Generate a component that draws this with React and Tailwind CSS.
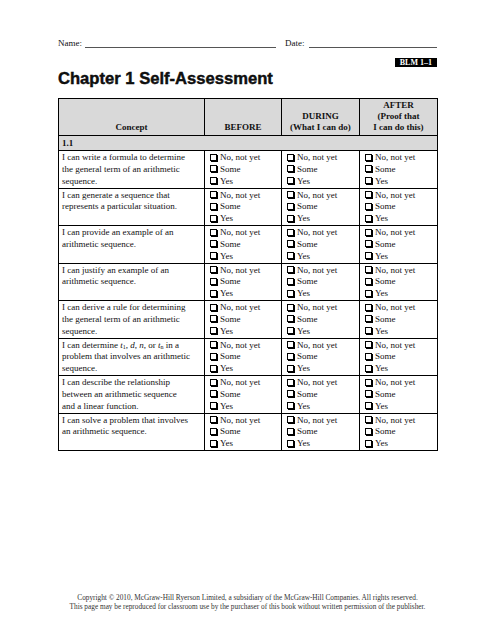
import React from 'react';

const rows = [
  ['I can write a formula to determine', 'the general term of an arithmetic', 'sequence.'],
  ['I can generate a sequence that', 'represents a particular situation.'],
  ['I can provide an example of an', 'arithmetic sequence.'],
  ['I can justify an example of an', 'arithmetic sequence.'],
  ['I can derive a rule for determining', 'the general term of an arithmetic', 'sequence.'],
  [
    <>
      I can determine <i>t</i>
      <sub className="text-[6px]">1</sub>, <i>d</i>, <i>n</i>, or <i>t</i>
      <sub className="text-[6px]">n</sub> in a
    </>,
    'problem that involves an arithmetic',
    'sequence.',
  ],
  ['I can describe the relationship', 'between an arithmetic sequence', 'and a linear function.'],
  ['I can solve a problem that involves', 'an arithmetic sequence.'],
];

const options = ['No, not yet', 'Some', 'Yes'];

function Box() {
  // wingdings-style shadowed square
  return (
    <span className="inline-block w-[7px] h-[7px] border border-black shadow-[1px_1px_0_#000] mr-[3px] align-[-0.5px]" />
  );
}

function Choices() {
  return (
    <td className="border border-black align-top pl-[5px] pt-[1px]">
      {options.map((o) => (
        <div key={o} className="whitespace-nowrap leading-[11.8px]">
          <Box />
          {o}
        </div>
      ))}
    </td>
  );
}

export default function App() {
  return (
    <div className="min-h-[640px] w-[495px] bg-white flex flex-col text-[#111] font-['Liberation_Serif',serif]">
      <div className="ml-[58px] w-[379px] pt-[38px]">
        {/* --- NAME / DATE --- */}
        <div className="flex items-end text-[9px] leading-[10px]">
          <span>Name:</span>
          <span className="ml-[3px] w-[191px] border-b border-[#555]" />
          <span className="ml-[9px]">Date:</span>
          <span className="ml-[4px] w-[128px] border-b border-[#555]" />
        </div>

        <div className="flex justify-end mt-[10px]">
          <span className="bg-black text-white font-bold text-[8px] leading-[9px] px-[5px]">BLM 1–1</span>
        </div>

        <h1 className="font-['Liberation_Sans',sans-serif] font-bold text-[16.6px] leading-[20px] [-webkit-text-stroke:0.4px_black] mt-[2px]">
          Chapter 1 Self-Assessment
        </h1>

        {/* --- TABLE --- */}
        <table className="mt-[9px] w-[379px] table-fixed border-collapse text-[9px]">
          <colgroup>
            <col className="w-[146px]" />
            <col className="w-[77px]" />
            <col className="w-[78px]" />
            <col className="w-[78px]" />
          </colgroup>
          <thead>
            <tr className="bg-[#d9d9d9] font-bold h-[37px] leading-[11px]">
              <th className="border border-black align-bottom pb-[2px]">Concept</th>
              <th className="border border-black align-bottom pb-[2px]">BEFORE</th>
              <th className="border border-black align-bottom pb-[2px]">
                DURING
                <br />
                (What I can do)
              </th>
              <th className="border border-black align-bottom pb-[2px]">
                AFTER
                <br />
                (Proof that
                <br />I can do this)
              </th>
            </tr>
          </thead>
          <tbody>
            <tr className="bg-[#d9d9d9] h-[15px]">
              <td colSpan={4} className="border border-black font-bold pl-[3px] leading-[12px]">
                1.1
              </td>
            </tr>
            {rows.map((lines, i) => (
              <tr key={i} className="h-[37.5px]">
                <td className="border border-black align-top pl-[3px] pt-[1px]">
                  {lines.map((l, j) => (
                    <div key={j} className="whitespace-nowrap leading-[11.8px]">
                      {l}
                    </div>
                  ))}
                </td>
                <Choices />
                <Choices />
                <Choices />
              </tr>
            ))}
          </tbody>
        </table>
      </div>

      {/* --- FOOTER --- */}
      <div className="mt-auto pb-[29px] text-center text-[7.3px] leading-[9px] text-[#333]">
        <div>Copyright © 2010, McGraw-Hill Ryerson Limited, a subsidiary of the McGraw-Hill Companies. All rights reserved.</div>
        <div>This page may be reproduced for classroom use by the purchaser of this book without written permission of the publisher.</div>
      </div>
    </div>
  );
}
